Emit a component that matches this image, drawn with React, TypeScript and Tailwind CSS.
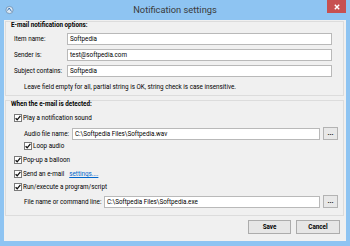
import React from "react";

const F = "font-['Roboto',sans-serif]";

function Check({ className = "" }: { className?: string }) {
  return (
    <span className={`flex h-[8px] w-[8px] shrink-0 items-center justify-center border border-[#7a7a7a] bg-white ${className}`}>
      <svg width="6" height="6" viewBox="0 0 6 6">
        <path d="M0.6 3.2 L2.2 4.8 L5.4 0.9" fill="none" stroke="#111" strokeWidth="1.3" />
      </svg>
    </span>
  );
}

function Input({ value, className = "" }: { value: string; className?: string }) {
  return (
    <div className={`flex h-[12px] min-w-0 items-center whitespace-nowrap border border-[#b9b9b9] bg-white pl-[2px] text-[6.3px] leading-[10px] text-black ${className}`}>
      {value}
    </div>
  );
}

function Browse() {
  return (
    <div className="ml-[3px] flex h-[13px] w-[15px] shrink-0 items-center justify-center border border-[#b3b3b3] bg-[#e8e8e8] text-[7px] font-bold leading-[7px] text-black">
      ...
    </div>
  );
}

export default function App() {
  return (
    <div className={`flex h-[246px] w-[350px] flex-col bg-[#8ec4f2] ${F} text-[6.3px] leading-[8px] text-black`}>
      <div className="grid h-[20px] grid-cols-[1fr_auto_1fr] items-center">
        <div className="flex items-center pl-[5px]">
          <svg width="9" height="10" viewBox="0 0 9 10">
            <circle cx="4.5" cy="5" r="3.6" fill="#d9e7f3" stroke="#6f8fb0" strokeWidth="0.8" />
            <path d="M2.5 5.5 L4.2 3 L6.5 6.5" fill="none" stroke="#3b72b0" strokeWidth="1" />
          </svg>
        </div>
        <div className="text-[9.3px] leading-[12px] text-[#3a3a3a]">Notification settings</div>
        <div className="flex h-full justify-end pr-[4px]">
          <div className="flex h-[13px] w-[19px] items-center justify-center bg-[#c75050]">
            <svg width="6" height="6" viewBox="0 0 6 6">
              <path d="M0.8 0.8 L5.2 5.2 M5.2 0.8 L0.8 5.2" stroke="white" strokeWidth="1.4" />
            </svg>
          </div>
        </div>
      </div>

      <div className="mx-[4px] mb-[5px] flex flex-1 flex-col bg-[#f0f0f0]">
        {/* group 1 */}
        <div className="ml-[1px] mr-[2px] mt-[1px] flex flex-col border border-[#dcdcdc] pl-[8px] pr-[11px]">
          <div className="-ml-[3px] h-[6px] whitespace-nowrap font-bold leading-[6px]">E-mail notification options:</div>
          <div className="mt-[5px] flex h-[12px] items-center">
            <span className="w-[53px] shrink-0 whitespace-nowrap">Item name:</span>
            <Input value="Softpedia" className="flex-1" />
          </div>
          <div className="mt-[4px] flex h-[12px] items-center">
            <span className="w-[53px] shrink-0 whitespace-nowrap">Sender is:</span>
            <Input value="test@softpedia.com" className="flex-1" />
          </div>
          <div className="mt-[4px] flex h-[12px] items-center">
            <span className="w-[53px] shrink-0 whitespace-nowrap">Subject contains:</span>
            <Input value="Softpedia" className="flex-1" />
          </div>
          <div className="mt-[5px] flex h-[10px] items-center whitespace-nowrap pl-[10px]">
            Leave field empty for all, partial string is OK, string check is case insensitive.
          </div>
          <div className="h-[3px]" />
        </div>

        {/* group 2 */}
        <div className="ml-[1px] mr-[2px] mt-[4px] flex flex-col border border-[#dcdcdc] pl-[8px] pr-[5px]">
          <div className="-ml-[3px] h-[7px] whitespace-nowrap font-bold leading-[7px]">When the e-mail is detected:</div>
          <div className="mt-[5px] flex h-[10px] items-center whitespace-nowrap">
            <Check />
            <span className="ml-[1px]">Play a notification sound</span>
          </div>
          <div className="mt-[4px] flex h-[13px] items-center pl-[10px]">
            <span className="w-[48px] shrink-0 whitespace-nowrap">Audio file name:</span>
            <Input value="C:\Softpedia Files\Softpedia.wav" className="flex-1" />
            <Browse />
          </div>
          <div className="mt-[1px] flex h-[10px] items-center whitespace-nowrap pl-[10px]">
            <Check />
            <span className="ml-[1px]">Loop audio</span>
          </div>
          <div className="mt-[4px] flex h-[10px] items-center whitespace-nowrap">
            <Check />
            <span className="ml-[1px]">Pop-up a balloon</span>
          </div>
          <div className="mt-[4px] flex h-[10px] items-center whitespace-nowrap">
            <Check />
            <span className="ml-[1px]">Send an e-mail</span>
            <span className="ml-[5px] text-[#0066cc] underline">settings....</span>
          </div>
          <div className="mt-[3px] flex h-[10px] items-center whitespace-nowrap">
            <Check />
            <span className="ml-[1px]">Run/execute a program/script</span>
          </div>
          <div className="mt-[3px] flex h-[13px] items-center pl-[10px]">
            <span className="w-[80px] shrink-0 whitespace-nowrap">File name or command line:</span>
            <Input value="C:\Softpedia Files\Softpedia.exe" className="flex-1" />
            <Browse />
          </div>
          <div className="h-[7px]" />
        </div>

        {/* buttons */}
        <div className="mt-[4px] flex justify-end gap-[5px] pr-[6px]">
          <div className="flex h-[14px] w-[43px] items-center justify-center border border-[#acacac] bg-[#e6e6e6] font-bold">Save</div>
          <div className="flex h-[14px] w-[44px] items-center justify-center border border-[#acacac] bg-[#e6e6e6] font-bold">Cancel</div>
        </div>
      </div>
    </div>
  );
}
